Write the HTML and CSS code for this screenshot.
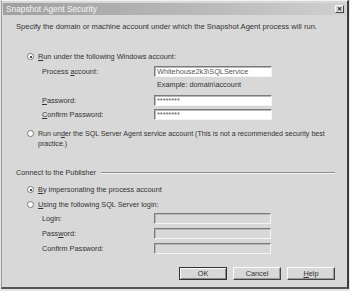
FILE: index.html
```html
<!DOCTYPE html>
<html>
<head>
<meta charset="utf-8">
<link rel="stylesheet" href="styles.css">
</head>
<body>
<div class="window">
  <div class="titlebar">
    <span class="title">Snapshot Agent Security</span>
    <span class="close">✕</span>
  </div>
  <div class="content">
    <p class="intro">Specify the domain or machine account under which the Snapshot Agent process will run.</p>

    <div class="radio-row r1"><span class="radio checked"></span><span><u>R</u>un under the following Windows account:</span></div>
    <div class="field f1"><span class="lbl">Process <u>a</u>ccount:</span><span class="input">Whitehouse2k3\SQLService</span></div>
    <div class="hint">Example: domain\account</div>
    <div class="field f2"><span class="lbl"><u>P</u>assword:</span><span class="input">********</span></div>
    <div class="field f3"><span class="lbl"><u>C</u>onfirm Password:</span><span class="input">********</span></div>

    <div class="radio-row r2"><span class="radio"></span><span class="nowrap">Run un<u>d</u>er the SQL Server Agent service account (This is not a recommended security best<br>practice.)</span></div>

    <div class="group"><span>Connect to the Publisher</span><span class="rule"></span></div>

    <div class="radio-row r3"><span class="radio checked"></span><span><u>B</u>y impersonating the process account</span></div>
    <div class="radio-row r4"><span class="radio"></span><span><u>U</u>sing the following SQL Server login:</span></div>
    <div class="field f4"><span class="lbl">Login:</span><span class="input disabled"></span></div>
    <div class="field f5"><span class="lbl">Pass<u>w</u>ord:</span><span class="input disabled"></span></div>
    <div class="field f5"><span class="lbl">Confirm Password:</span><span class="input disabled"></span></div>

    <div class="buttons">
      <span class="btn default">OK</span>
      <span class="btn">Cancel</span>
      <span class="btn"><u>H</u>elp</span>
    </div>
  </div>
</div>
</body>
</html>
```
FILE: styles.css
```css
html, body {
  margin: 0;
  padding: 0;
  background: #e6e6e6;
}
body {
  width: 350px;
  height: 291px;
  overflow: hidden;
  font-family: "Liberation Sans", Arial, sans-serif;
  font-size: 7.3px;
  color: #333;
}
.window {
  box-sizing: border-box;
  margin-left: 1px;
  width: 348px;
  height: 289px;
  background: #d8d8d8;
  border-left: 1px solid #9a9a9a;
  border-right: 2px solid #3c3c3c;
  border-bottom: 2px solid #555;
  border-top: 1px solid #f2f2f2;
  padding: 2px 1px 0 1px;
}
.titlebar {
  height: 12px;
  display: flex;
  align-items: center;
  justify-content: space-between;
  background: linear-gradient(to right, #a0a0a0, #b8b8b8 55%, #cfcfcf);
  padding: 0 2px 0 3px;
}
.title {
  color: #f6f6f6;
  font-size: 8.3px;
}
.close {
  width: 9px;
  height: 8px;
  box-sizing: border-box;
  background: #d8d8d8;
  border: 1px solid;
  border-color: #fafafa #444 #444 #fafafa;
  font-size: 6px;
  line-height: 6px;
  text-align: center;
  font-weight: bold;
  color: #111;
}
.content {
  padding-left: 13px;
  display: flex;
  flex-direction: column;
}
.intro {
  margin: 7px 0 0 0;
  line-height: 10px;
  height: 10px;
  font-size: 7.6px;
  white-space: nowrap;
}
.nowrap { white-space: nowrap; }
.radio-row {
  display: flex;
  align-items: flex-start;
  line-height: 10px;
  padding-left: 11px;
}
.radio-row .radio {
  flex: none;
  width: 7px;
  height: 7px;
  box-sizing: border-box;
  border-radius: 50%;
  background: #fff;
  border: 1px solid #777;
  margin: 1px 4px 0 0;
  position: relative;
}
.radio.checked::after {
  content: "";
  position: absolute;
  left: 1.5px;
  top: 1.5px;
  width: 2px;
  height: 2px;
  border-radius: 50%;
  background: #111;
}
.r1 { margin-top: 20px; }
.r2 { margin-top: 9px; font-size: 7.1px; }
.r3 { margin-top: 7px; }
.r4 { margin-top: 5px; }
.field {
  display: flex;
  align-items: center;
  height: 11px;
  padding-left: 26px;
}
.field .lbl {
  width: 112px;
  flex: none;
}
.input {
  box-sizing: border-box;
  width: 118px;
  height: 11px;
  background: #fff;
  border: 1px solid;
  border-color: #7a7a7a #f4f4f4 #f4f4f4 #7a7a7a;
  box-shadow: inset 1px 1px 0 #b8b8b8;
  font-size: 7.3px;
  line-height: 9px;
  padding-left: 2px;
  color: #555;
  overflow: hidden;
  white-space: nowrap;
}
.input.disabled {
  background: #d8d8d8;
  width: 117px;
}
.f1 { margin-top: 4px; }
.f2 { margin-top: 5px; }
.f3 { margin-top: 3px; }
.f4 { margin-top: 3px; }
.f5 { margin-top: 4px; }
.hint {
  margin-top: 3px;
  padding-left: 141px;
  line-height: 10px;
  height: 10px;
}
.group {
  margin-top: 19px;
  display: flex;
  align-items: center;
  line-height: 10px;
  padding-right: 11px;
}
.group .rule {
  flex: 1;
  margin-left: 5px;
  height: 0;
  border-top: 1px solid #8c8c8c;
  border-bottom: 1px solid #f6f6f6;
}
.buttons {
  margin-top: 13px;
  display: flex;
  justify-content: flex-end;
  gap: 6px;
  padding-right: 11px;
}
.btn {
  box-sizing: border-box;
  width: 48px;
  height: 13px;
  background: #d8d8d8;
  border: 1px solid;
  border-color: #fafafa #444 #444 #fafafa;
  box-shadow: inset -1px -1px 0 #9a9a9a;
  text-align: center;
  line-height: 11px;
}
.btn.default {
  border-color: #333;
  box-shadow: inset 1px 1px 0 #fafafa, inset -1px -1px 0 #888;
}
u { text-decoration: underline; }
```
